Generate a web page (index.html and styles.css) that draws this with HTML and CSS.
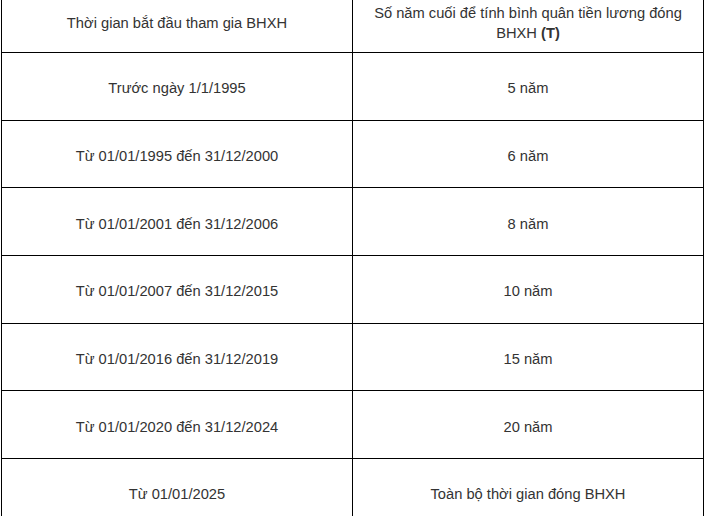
FILE: index.html
```html
<!DOCTYPE html>
<html lang="vi">
<head>
<meta charset="utf-8">
<title>Bảng số năm tính bình quân tiền lương</title>
<link rel="stylesheet" href="styles.css">
</head>
<body>
<table class="salary-table">
  <thead>
    <tr class="head-row">
      <th class="cell">Thời gian bắt đầu tham gia BHXH</th>
      <th class="cell">Số năm cuối để tính bình quân tiền lương đóng BHXH <strong>(T)</strong></th>
    </tr>
  </thead>
  <tbody>
    <tr class="row"><td class="cell">Trước ngày 1/1/1995</td><td class="cell">5 năm</td></tr>
    <tr class="row"><td class="cell">Từ 01/01/1995 đến 31/12/2000</td><td class="cell">6 năm</td></tr>
    <tr class="row"><td class="cell">Từ 01/01/2001 đến 31/12/2006</td><td class="cell">8 năm</td></tr>
    <tr class="row"><td class="cell">Từ 01/01/2007 đến 31/12/2015</td><td class="cell">10 năm</td></tr>
    <tr class="row"><td class="cell">Từ 01/01/2016 đến 31/12/2019</td><td class="cell">15 năm</td></tr>
    <tr class="row"><td class="cell">Từ 01/01/2020 đến 31/12/2024</td><td class="cell">20 năm</td></tr>
    <tr class="row"><td class="cell">Từ 01/01/2025</td><td class="cell">Toàn bộ thời gian đóng BHXH</td></tr>
  </tbody>
</table>
</body>
</html>
```

FILE: styles.css
```css
html, body {
  margin: 0;
  padding: 0;
  background: #fff;
}

body {
  font-family: "Liberation Sans", Arial, sans-serif;
  font-size: 14.7px;
  line-height: 20px;
  color: #333;
  overflow: hidden;
}

.salary-table {
  border-collapse: collapse;
  table-layout: fixed;
  width: 703px;
  margin: -10px 0 0 1px;
}

.cell {
  border: 1px solid #000;
  text-align: center;
  vertical-align: middle;
  padding: 0 8px;
  width: 50%;
}

th.cell {
  font-weight: normal;
  padding-top: 2px;
}

.head-row .cell {
  height: 59px;
}

.row .cell {
  height: 62.67px;
  padding-top: 4px;
}
```
